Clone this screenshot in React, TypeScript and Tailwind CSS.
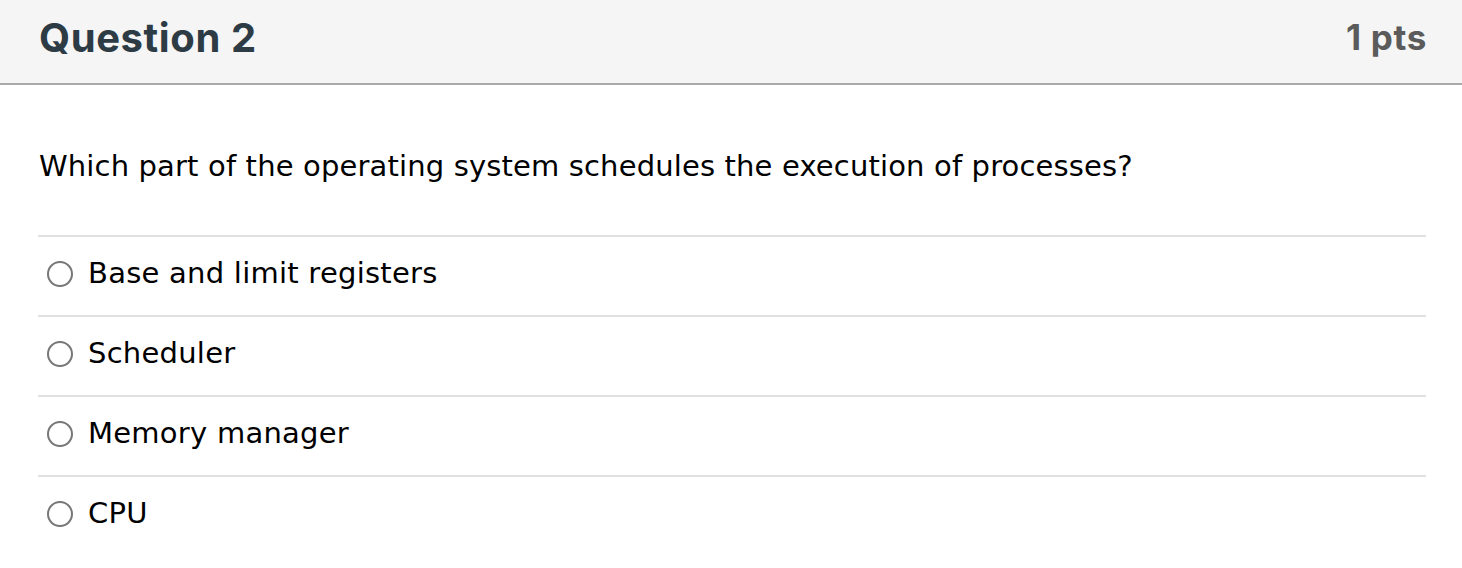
const options = [
  "Base and limit registers",
  "Scheduler",
  "Memory manager",
  "CPU",
];

export default function App() {
  return (
    <div className="w-[1462px] h-[568px] bg-white overflow-hidden">
      {/* header */}
      <div className="h-[85px] bg-[#f5f5f5] border-b-2 border-[#a9a9a9] flex items-center justify-between pl-[39px] pr-[35px] pb-[8px]">
        <h2 className="font-['Inter',sans-serif] font-bold text-[40px] tracking-[0.015em] text-[#2d3b45]">
          Question 2
        </h2>
        <div className="font-['Inter',sans-serif] font-bold text-[35px] tracking-[0.02em] text-[#5b5b5b]">
          1 pts
        </div>
      </div>

      <div className="pl-[38px] pr-[36px]">
        <p className="pt-[61px] pb-[49px] pl-[1px] font-['DejaVu_Sans',sans-serif] text-[29px] leading-[40px] tracking-[0.15px] text-black">
          Which part of the operating system schedules the execution of processes?
        </p>

        <div>
          {options.map((o) => (
            <label
              key={o}
              className="h-[80px] border-t-2 border-[#e0e0e0] flex items-center gap-[15px] pl-[9px] pb-[5px]"
            >
              <span className="w-[26px] h-[26px] rounded-full border-2 border-[#777] bg-white shrink-0" />
              <span className="font-['DejaVu_Sans',sans-serif] text-[29px] tracking-[0.25px] text-black">
                {o}
              </span>
            </label>
          ))}
        </div>
      </div>
    </div>
  );
}
